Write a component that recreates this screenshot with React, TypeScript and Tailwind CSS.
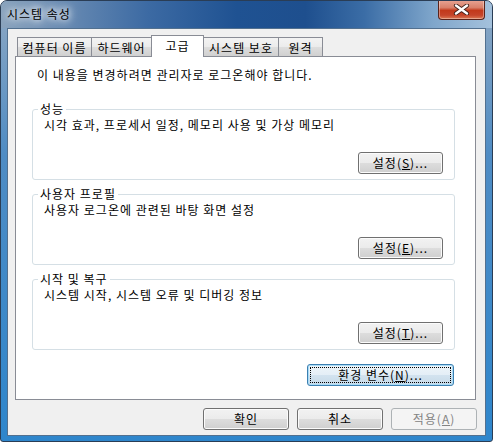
import React from "react";

type BtnProps = {
  children: React.ReactNode;
  className?: string;
  disabled?: boolean;
  focused?: boolean;
};

function Btn({ children, className = "", disabled, focused }: BtnProps) {
  if (disabled) {
    return (
      <div
        className={`flex h-[22px] items-center justify-center rounded-[3px] border border-[#adb2b5] bg-[#f4f4f4] text-[#838383] ${className}`}
      >
        {children}
      </div>
    );
  }
  if (focused) {
    return (
      <div
        className={`flex h-[22px] rounded-[3px] border border-[#3c7fb1] bg-[linear-gradient(180deg,#eef5fa_0%,#e4eef6_50%,#d3e3ef_50%,#c7dae9_100%)] p-[2px] shadow-[inset_0_0_0_1px_#a9dcf7] ${className}`}
      >
        <div className="flex flex-1 items-center justify-center border border-dotted border-black">
          {children}
        </div>
      </div>
    );
  }
  return (
    <div
      className={`flex h-[22px] items-center justify-center rounded-[3px] border border-[#707070] bg-[linear-gradient(180deg,#f2f2f2_0%,#ebebeb_50%,#dddddd_50%,#cfcfcf_100%)] shadow-[inset_0_0_0_1px_#fbfbfb] ${className}`}
    >
      {children}
    </div>
  );
}

function Group({
  label,
  desc,
  btn,
  className = "",
}: {
  label: string;
  desc: string;
  btn: React.ReactNode;
  className?: string;
}) {
  return (
    <div
      className={`relative ml-[16px] flex h-[71px] w-[423px] flex-col rounded-[3px] border border-[#d5dfe5] ${className}`}
    >
      <span className="absolute -top-[8px] left-[5px] bg-white px-[2px] leading-[14px]">
        {label}
      </span>
      <div className="pl-[11px] pt-[8px] leading-[14px]">{desc}</div>
      <Btn className="mb-[5px] mr-[11px] mt-auto w-[85px] self-end">{btn}</Btn>
    </div>
  );
}

function Tab({ label, w, active }: { label: string; w: string; active?: boolean }) {
  if (active) {
    return (
      <div
        className={`relative z-10 -ml-px flex h-[22px] items-start justify-center border border-b-0 border-[#898c95] bg-white pt-[2px] leading-[16px] ${w}`}
      >
        {label}
      </div>
    );
  }
  return (
    <div
      className={`-ml-px flex h-[20px] items-start justify-center border border-b-0 border-[#898c95] bg-[linear-gradient(180deg,#f3f3f3_0%,#ebebeb_50%,#dddddd_50%,#cfcfcf_100%)] pt-[2px] leading-[16px] first:ml-0 ${w}`}
    >
      {label}
    </div>
  );
}

export default function App() {
  return (
    <div className="h-[442px] w-[493px] bg-white font-['Noto_Sans_CJK_KR','Noto_Sans',sans-serif] text-[12px] tracking-[1px] text-black">
      <div className="flex h-[442px] w-[493px] flex-col overflow-hidden rounded-t-[7px] rounded-b-[3px] border border-[#2a3d55] bg-[linear-gradient(180deg,#8ea8c3_0%,#4f8cc4_35%,#2e86cc_100%)]">
        {/* title bar */}
        <div className="flex h-[27px] shrink-0 items-start justify-between bg-[linear-gradient(90deg,#8aa3bd_0%,#6a8cb3_12%,#3c6aa3_30%,#1f5292_48%,#1e4f8e_62%,#3b6da6_74%,#7fa6cb_88%,#a4c1dc_100%)] pl-[6px] pr-[7px]">
          <span className="mt-[5px] leading-[16px] [text-shadow:0_0_6px_#fff,0_0_10px_#fff,0_0_14px_rgba(255,255,255,0.8)]">
            시스템 속성
          </span>
          <div className="-mt-px flex h-[20px] w-[47px] items-center justify-center rounded-b-[4px] border border-t-0 border-[#5a231a] bg-[linear-gradient(180deg,#e8a595_0%,#d8806a_40%,#c2391b_55%,#c5442a_80%,#dc7a55_100%)] shadow-[inset_0_0_0_1px_rgba(255,255,255,0.35)]">
            <svg width="17" height="11" viewBox="0 0 17 11">
              <path d="M3 1.5 L14 9.5 M14 1.5 L3 9.5" stroke="#40201a" strokeWidth="4.2" strokeLinecap="round" />
              <path d="M3 1.5 L14 9.5 M14 1.5 L3 9.5" stroke="#ffffff" strokeWidth="2.4" strokeLinecap="round" />
            </svg>
          </div>
        </div>

        {/* client */}
        <div className="mx-[6px] mb-[5px] flex flex-1 flex-col border border-[#52708f] bg-[#f0f0f0] pt-[6px]">
          <div className="flex h-[22px] items-end pl-[9px]">
            <Tab label="컴퓨터 이름" w="w-[75px]" />
            <Tab label="하드웨어" w="w-[61px]" />
            <Tab label="고급" w="w-[53px]" active />
            <Tab label="시스템 보호" w="w-[76px]" />
            <Tab label="원격" w="w-[45px]" />
          </div>

          <div className="relative z-0 -mt-px ml-[7px] mr-[9px] flex h-[344px] flex-col border border-[#898c95] bg-white">
            <div className="pl-[21px] pt-[11px] leading-[14px]">
              이 내용을 변경하려면 관리자로 로그온해야 합니다.
            </div>
            <Group
              className="mt-[27px]"
              label="성능"
              desc="시각 효과, 프로세서 일정, 메모리 사용 및 가상 메모리"
              btn={<span>설정(<u>S</u>)...</span>}
            />
            <Group
              className="mt-[14px]"
              label="사용자 프로필"
              desc="사용자 로그온에 관련된 바탕 화면 설정"
              btn={<span>설정(<u>E</u>)...</span>}
            />
            <Group
              className="mt-[14px]"
              label="시작 및 복구"
              desc="시스템 시작, 시스템 오류 및 디버깅 정보"
              btn={<span>설정(<u>T</u>)...</span>}
            />
            <Btn focused className="mr-[21px] mt-[14px] w-[147px] self-end">
              <span>환경 변수(<u>N</u>)...</span>
            </Btn>
          </div>

          <div className="mt-[8px] flex justify-end gap-[8px] pr-[8px]">
            <Btn className="w-[86px]">확인</Btn>
            <Btn className="w-[86px]">취소</Btn>
            <Btn disabled className="w-[86px]">
              <span>적용(<u>A</u>)</span>
            </Btn>
          </div>
        </div>
      </div>
    </div>
  );
}
